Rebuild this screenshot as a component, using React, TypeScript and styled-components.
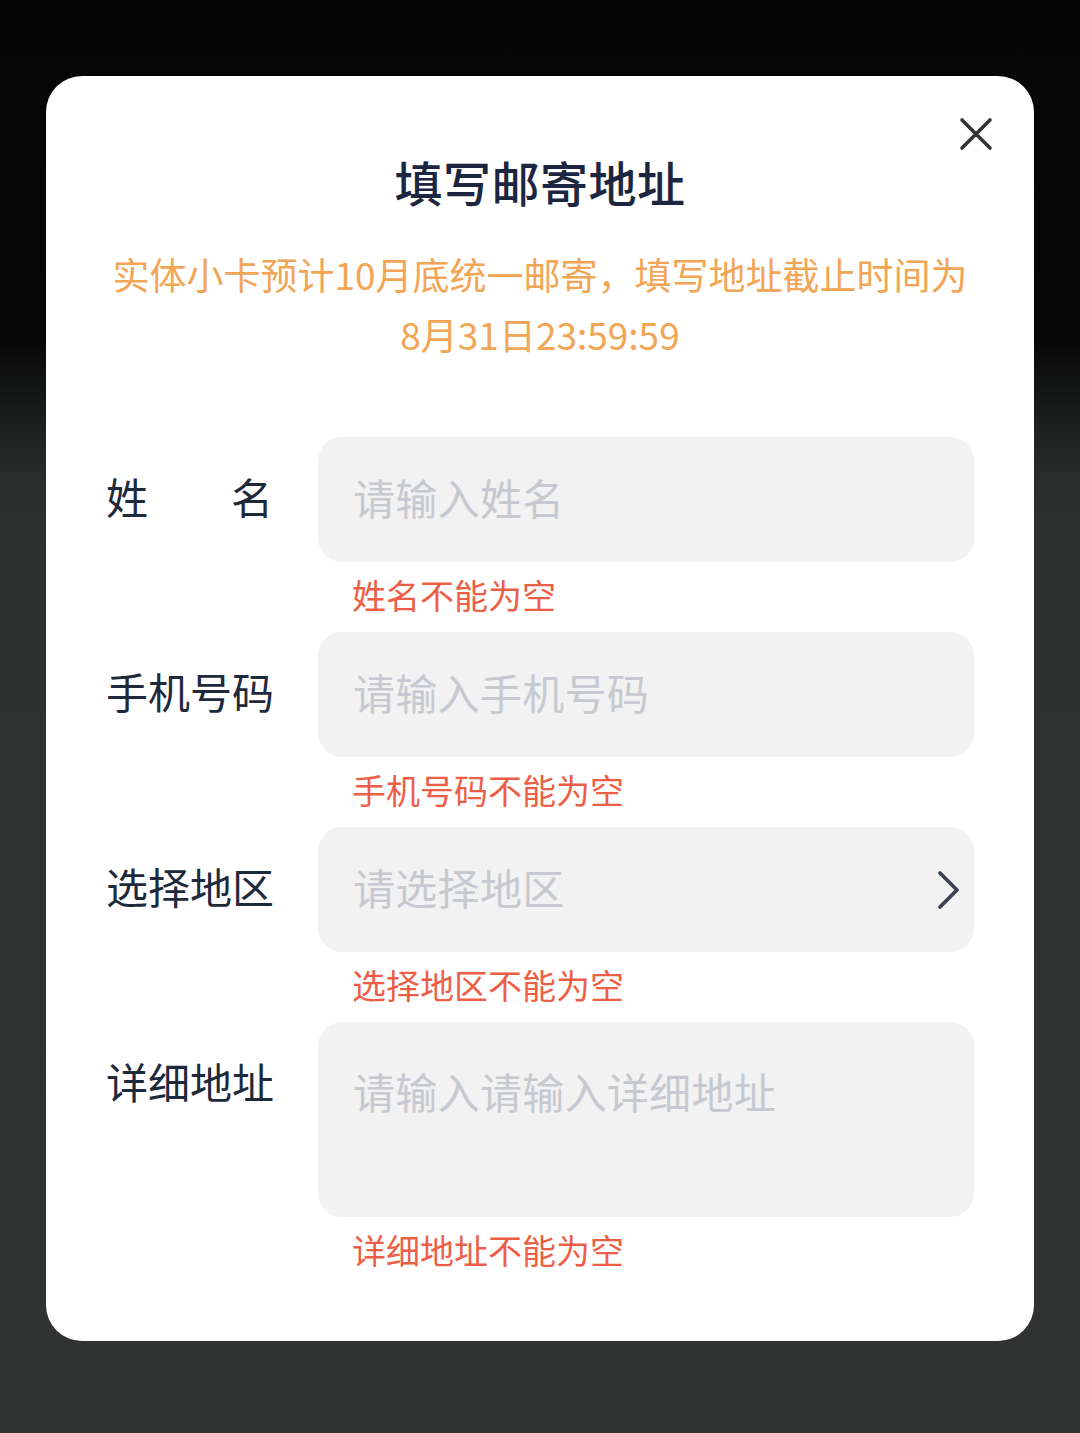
import React from "react";
import styled, { createGlobalStyle } from "styled-components";

const GlobalStyle = createGlobalStyle`
  html, body { margin: 0; padding: 0; }
  body {
    font-family: "Noto Sans CJK SC", "Noto Sans", sans-serif;
    background: #313332;
  }
  * { box-sizing: border-box; }
`;

const Page = styled.div`
  min-height: 1433px;
  padding: 76px 46px 0;
  background: linear-gradient(
    to bottom,
    #050505 0px,
    #070707 340px,
    #1c1e1e 420px,
    #2b2d2d 480px,
    #303231 560px,
    #313332 100%
  );
`;

const Card = styled.div`
  position: relative;
  background: #ffffff;
  border-radius: 36px;
  padding: 75px 60px 54px 60px;
  display: flex;
  flex-direction: column;
`;

const CloseButton = styled.button`
  position: absolute;
  top: 40px;
  right: 40px;
  width: 36px;
  height: 36px;
  padding: 0;
  border: none;
  background: transparent;
  display: flex;
  align-items: center;
  justify-content: center;
  cursor: pointer;
`;

const Title = styled.h1`
  margin: 0;
  font-size: 48px;
  line-height: 60px;
  font-weight: 500;
  color: #1c2640;
  text-align: center;
  letter-spacing: 0.5px;
`;

const Notice = styled.p`
  margin: 33px 0 0;
  font-size: 37px;
  line-height: 60px;
  color: #f2a554;
  text-align: center;
`;

const Form = styled.div`
  margin-top: 73px;
  display: flex;
  flex-direction: column;
`;

const Row = styled.div`
  display: grid;
  grid-template-columns: 167px 1fr;
  column-gap: 45px;
  align-items: start;
`;

const Label = styled.div`
  height: 125px;
  padding-bottom: 8px;
  display: flex;
  align-items: center;
  justify-content: space-between;
  font-size: 42px;
  color: #1e2a3c;
`;

const FieldColumn = styled.div`
  display: flex;
  flex-direction: column;
`;

const Field = styled.div<{ $tall?: boolean }>`
  height: ${(p) => (p.$tall ? "195px" : "125px")};
  background: #f2f2f2;
  border-radius: 24px;
  padding: ${(p) => (p.$tall ? "38px 12px 0 35px" : "0 12px 6px 35px")};
  display: flex;
  align-items: ${(p) => (p.$tall ? "flex-start" : "center")};
  justify-content: space-between;
`;

const Placeholder = styled.span`
  font-size: 42px;
  line-height: 62px;
  color: #c6c9cf;
  letter-spacing: 0.3px;
`;

const ErrorText = styled.div`
  height: 70px;
  padding: 8px 0 0 34px;
  font-size: 34px;
  line-height: 50px;
  color: #ec5f46;
`;

const ChevronSlot = styled.span`
  display: flex;
  margin-top: 6px;
`;

const CloseIcon = () => (
  <svg width="34" height="34" viewBox="0 0 34 34">
    <path
      d="M3 3 L31 31 M31 3 L3 31"
      stroke="#333333"
      strokeWidth="3.6"
      strokeLinecap="round"
    />
  </svg>
);

const Chevron = () => (
  <svg width="26" height="40" viewBox="0 0 26 40">
    <path
      d="M4 3 L21 20 L4 37"
      fill="none"
      stroke="#3b4253"
      strokeWidth="3.8"
      strokeLinecap="round"
      strokeLinejoin="round"
    />
  </svg>
);

type FieldDef = {
  label: string;
  placeholder: string;
  error: string;
  select?: boolean;
  tall?: boolean;
};

const fields: FieldDef[] = [
  { label: "姓名", placeholder: "请输入姓名", error: "姓名不能为空" },
  { label: "手机号码", placeholder: "请输入手机号码", error: "手机号码不能为空" },
  { label: "选择地区", placeholder: "请选择地区", error: "选择地区不能为空", select: true },
  { label: "详细地址", placeholder: "请输入请输入详细地址", error: "详细地址不能为空", tall: true },
];

export default function App() {
  return (
    <>
      <GlobalStyle />
      <Page>
        <Card>
          <CloseButton aria-label="关闭">
            <CloseIcon />
          </CloseButton>
          <Title>填写邮寄地址</Title>
          <Notice>
            实体小卡预计10月底统一邮寄，填写地址截止时间为
            <br />
            8月31日23:59:59
          </Notice>
          <Form>
            {fields.map((f) => (
              <Row key={f.label}>
                <Label>
                  {f.label.split("").map((c, i) => (
                    <span key={i}>{c}</span>
                  ))}
                </Label>
                <FieldColumn>
                  <Field $tall={f.tall}>
                    <Placeholder>{f.placeholder}</Placeholder>
                    {f.select && (
                      <ChevronSlot>
                        <Chevron />
                      </ChevronSlot>
                    )}
                  </Field>
                  <ErrorText>{f.error}</ErrorText>
                </FieldColumn>
              </Row>
            ))}
          </Form>
        </Card>
      </Page>
    </>
  );
}
